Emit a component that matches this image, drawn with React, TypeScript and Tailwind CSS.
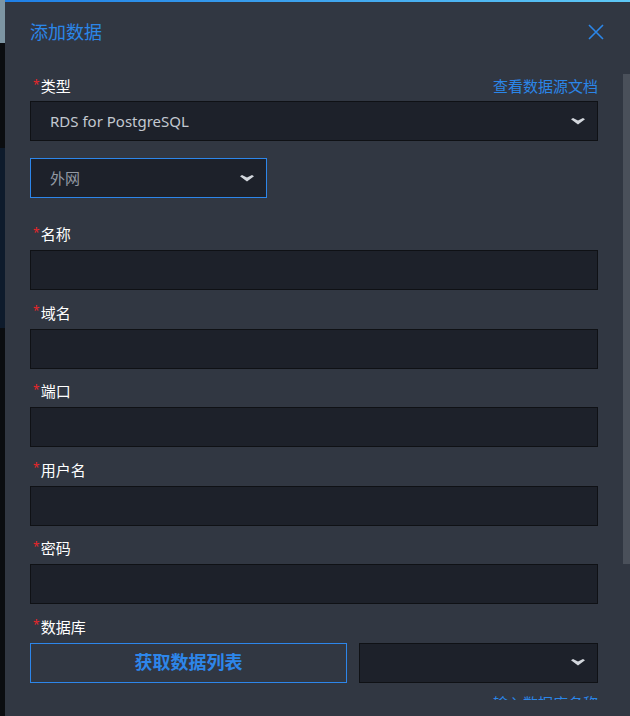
import React from "react"

const font = { fontFamily: '"Noto Sans", "Noto Sans CJK SC", sans-serif' }

function Chevron() {
  return (
    <svg width="14" height="7" viewBox="0 0 14 7" className="shrink-0">
      <path d="M0 1.2 L2 0 L7 2.6 L12 0 L14 1.2 L7 6.5 Z" fill="#d3d7dd" />
    </svg>
  )
}

function Label({ text }: { text: string }) {
  return (
    <div className="flex items-center h-5 text-[15px] text-white leading-5">
      <span className="text-[#e8262a] text-xs mr-[1px] ml-[3px] -mt-[3px]">*</span>
      {text}
    </div>
  )
}

function Input() {
  return <div className="h-10 bg-[#1d212a] border border-[#0f1115]" />
}

const fields = ["名称", "域名", "端口", "用户名", "密码"]

export default function App() {
  return (
    <div className="w-[630px] h-[716px] flex overflow-hidden bg-[#0b0d10]" style={font}>
      {/* background page peeking out on the left */}
      <div className="w-[5px] flex flex-col shrink-0">
        <div className="h-[43px] bg-[#7d95a3]" />
        <div className="h-[105px] bg-[#0b0d10]" />
        <div className="h-[180px] bg-[#0e1b2c]" />
        <div className="flex-1 bg-[#0b0d10]" />
      </div>

      <div className="relative flex-1 bg-[#313742]">
        <div className="h-[2px] bg-gradient-to-r from-[#1f7fe6] to-[#5ec8f5]" />

        {/* header */}
        <div className="flex items-center justify-between pl-[25px] pr-[26px] pt-[17px] h-[43px]">
          <span className="text-[18px] leading-6 text-[#2b86e8]">添加数据</span>
          <svg width="16" height="16" viewBox="0 0 16 16">
            <path d="M1 1 L15 15 M15 1 L1 15" stroke="#2b86e8" strokeWidth="1.6" />
          </svg>
        </div>

        <div className="h-[655px] overflow-hidden pl-[25px] pr-[32px] pt-[31px]">
          {/* type */}
          <div className="flex items-center justify-between">
            <Label text="类型" />
            <span className="text-[15px] leading-5 text-[#2b86e8]">查看数据源文档</span>
          </div>
          <div className="mt-[5px] h-10 bg-[#1d212a] border border-[#0f1115] flex items-center justify-between pl-[19px] pr-[12px]">
            <span className="text-[15px] text-[#c3c8d0]">RDS for PostgreSQL</span>
            <Chevron />
          </div>

          <div className="mt-[17px] w-[237px] h-10 bg-[#1d212a] border border-[#2d86ea] flex items-center justify-between pl-[19px] pr-[12px]">
            <span className="text-[15px] text-[#9299a3]">外网</span>
            <Chevron />
          </div>

          {fields.map((f, i) => (
            <div key={f} className={i === 0 ? "mt-[26px]" : "mt-[12.6px]"}>
              <Label text={f} />
              <div className="mt-[6px]">
                <Input />
              </div>
            </div>
          ))}

          {/* database */}
          <div className="mt-[12.6px]">
            <Label text="数据库" />
            <div className="mt-[6px] flex gap-3">
              <button className="w-[317px] h-10 border border-[#2d86ea] text-[18px] font-bold text-[#2d86ea] flex items-center justify-center">
                获取数据列表
              </button>
              <div className="flex-1 h-10 bg-[#1d212a] border border-[#0f1115] flex items-center justify-end pr-[12px]">
                <Chevron />
              </div>
            </div>
            <div className="mt-[10px] text-right text-[15px] leading-5 text-[#2b86e8]">输入数据库名称</div>
          </div>
        </div>

        {/* scrollbar */}
        <div className="absolute right-0 top-[74px] w-[7px] h-[490px] bg-[#4a505a]" />
      </div>
    </div>
  )
}
